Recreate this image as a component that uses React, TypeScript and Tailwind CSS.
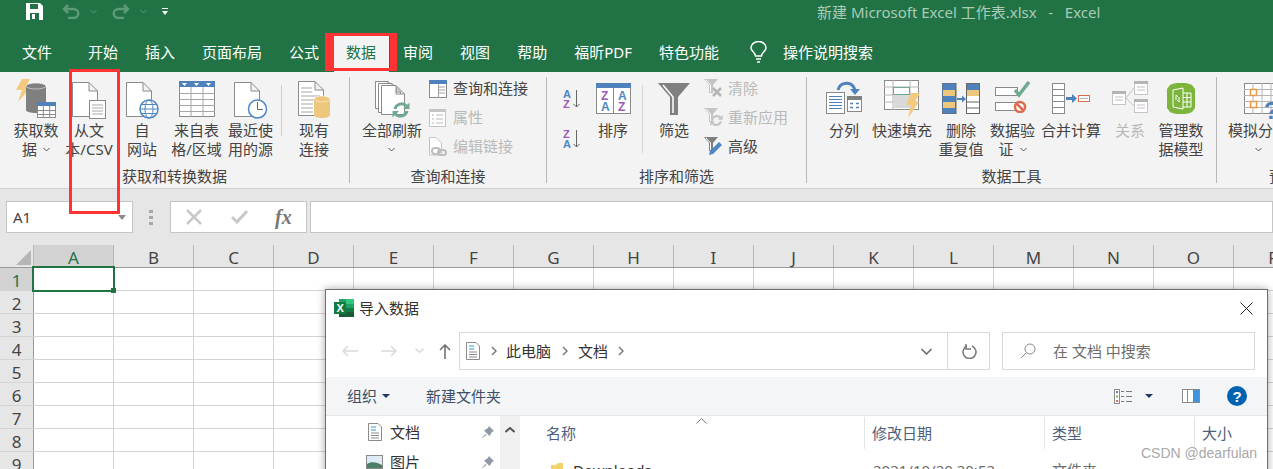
import React from 'react';

const blue = '#4f81bd';
const line = '#8a8a8a';
const orange = '#f2c97d';
const dis = '#c4c4c4';

const Chev = ({ className = '' }: { className?: string }) => (
  <svg width="7" height="5" viewBox="0 0 7 5" className={className}>
    <path d="M.5 1 3.5 4 6.5 1" fill="none" stroke="#555" />
  </svg>
);

const Doc = ({ x = 0, y = 0, w = 26, h = 35, c = line }: { x?: number; y?: number; w?: number; h?: number; c?: string }) => (
  <path d={`M${x + .5} ${y + .5}H${x + w - 9}L${x + w - .5} ${y + 9}V${y + h - .5}H${x + .5}ZM${x + w - 9} ${y + .5}V${y + 9}H${x + w - .5}`} fill="#fff" stroke={c} />
);

const Cyl = ({ x, y, w, h, c }: { x: number; y: number; w: number; h: number; c: string }) => (
  <g>
    <path d={`M${x} ${y + 3}V${y + h - 3}C${x} ${y + h + 1} ${x + w} ${y + h + 1} ${x + w} ${y + h - 3}V${y + 3}Z`} fill={c} />
    <ellipse cx={x + w / 2} cy={y + 3} rx={w / 2} ry="3" fill={c} stroke="#fff" strokeOpacity=".5" />
  </g>
);

const MiniTable = ({ x, y, w, h }: { x: number; y: number; w: number; h: number }) => (
  <g>
    <rect x={x + .5} y={y + .5} width={w - 1} height={h - 1} fill="#fff" stroke={line} />
    <rect x={x} y={y} width={w} height="4" fill={blue} />
    <path d={`M${x + w / 3} ${y + 4}V${y + h}M${x + (2 * w) / 3} ${y + 4}V${y + h}M${x} ${y + 8.5}H${x + w}M${x} ${y + 12.5}H${x + w}`} stroke={line} />
  </g>
);

const IconGet = () => (
  <svg width="41" height="42" viewBox="0 0 41 42">
    <path d="M6 1H14L10 9H15L2 24 6 12H0Z" fill={orange} />
    <Cyl x={10} y={5} w={20} h={30} c="#808080" />
    <MiniTable x={21} y={24} w={19} h={16} />
  </svg>
);
const IconText = () => (
  <svg width="34" height="37" viewBox="0 0 34 37">
    <Doc />
    <rect x="17.5" y="18.5" width="16" height="18" fill="#fff" stroke={line} />
    <path d="M20 23H31M20 26H31M20 29H31M20 32H31" stroke="#a8a8a8" />
  </svg>
);
const IconWeb = () => (
  <svg width="33" height="37" viewBox="0 0 33 37">
    <Doc />
    <circle cx="23" cy="27" r="9" fill="#fff" stroke="#4f86c6" strokeWidth="1.5" />
    <ellipse cx="23" cy="27" rx="4" ry="9" fill="none" stroke="#4f86c6" />
    <path d="M14 27H32M15.5 22.5H30.5M15.5 31.5H30.5" stroke="#4f86c6" />
  </svg>
);
const IconSheet = () => (
  <svg width="36" height="36" viewBox="0 0 36 36">
    <rect x=".5" y=".5" width="35" height="35" fill="#fff" stroke={line} />
    <rect width="36" height="6" fill={blue} />
    <path d="M3 2H8L5.5 5ZM15 2H20L17.5 5ZM27 2H32L29.5 5Z" fill="#fff" />
    <path d="M12 6V36M24 6V36M0 12.5H36M0 18.5H36M0 24.5H36M0 30.5H36" stroke="#a6a6a6" />
  </svg>
);
const IconRecent = () => (
  <svg width="34" height="37" viewBox="0 0 34 37">
    <Doc />
    <circle cx="23.5" cy="27" r="9" fill="#fff" stroke="#4f86c6" strokeWidth="1.5" />
    <path d="M23.5 20V27.5H29" fill="none" stroke="#666" />
  </svg>
);
const IconExisting = () => (
  <svg width="33" height="38" viewBox="0 0 33 38">
    <Doc />
    <path d="M3 7H14M3 11H14M3 15H22M3 19H22M3 23H15M3 27H15M3 31H15" stroke="#a6a6a6" />
    <Cyl x={16} y={15} w={16} h={22} c="#edc77c" />
  </svg>
);
const Refresh = ({ c, size = 18 }: { c: string; size?: number }) => (
  <svg width={size} height={size} viewBox="0 0 18 18" fill="none" stroke={c} strokeWidth="3">
    <path d="M3 8C4 3 11 1 14.500 5" />
    <path d="M15 10C14 15 7 17 3.500 13" />
    <path d="M17.500 1.500V8H11ZM.5 16.500V10H7Z" fill={c} stroke="none" />
  </svg>
);
const IconRefreshAll = () => (
  <svg width="37" height="40" viewBox="0 0 37 40">
    <Doc x={1} y={1} w={22} h={28} />
    <Doc x={4} y={3} w={23} h={30} />
    <Doc x={7} y={5} w={24} h={30} />
    <g transform="translate(18,21)">
      <Refresh c="#6fa98f" size={18} />
    </g>
  </svg>
);
const IconQuery = () => (
  <svg width="18" height="18" viewBox="0 0 18 18">
    <rect x=".5" y=".5" width="17" height="17" fill="#fff" stroke={line} />
    <rect width="18" height="4" fill={blue} />
    <path d="M10 7H16M10 10H16M10 13H16M9.500 4V18" stroke="#a0a0a0" />
  </svg>
);
const IconProps = () => (
  <svg width="18" height="18" viewBox="0 0 18 18">
    <rect x=".5" y=".5" width="16" height="17" fill="#fff" stroke={dis} />
    <rect width="17" height="3" fill={dis} />
    <path d="M3 6H5M3 10H5M3 14H5M7 6H14M7 10H14M7 14H14" stroke="#b5b5b5" />
  </svg>
);
const IconEditLink = () => (
  <svg width="18" height="19" viewBox="0 0 18 19">
    <path d="M.5.5H7L12.500 6V18H.5Z" fill="#fff" stroke={dis} />
    <g fill="none" stroke="#bdbdbd" strokeWidth="2">
      <rect x="3" y="11" width="8" height="6" rx="3" />
      <rect x="9" y="13" width="8" height="5" rx="2.500" />
    </g>
  </svg>
);
const Sort = ({ a, b, ca, cb }: { a: string; b: string; ca: string; cb: string }) => (
  <svg width="18" height="20" viewBox="0 0 18 20" fontFamily="Liberation Sans" fontSize="11" fontWeight="700">
    <text x="0" y="9" fill={ca}>{a}</text>
    <text x="0" y="19" fill={cb}>{b}</text>
    <path d="M13.500 1V18M10.500 15 13.500 18 16.500 15" fill="none" stroke="#666" />
  </svg>
);
const IconSort = () => (
  <svg width="35" height="31" viewBox="0 0 35 31" fontFamily="Liberation Sans" fontSize="12" fontWeight="700">
    <rect x=".5" y=".5" width="34" height="30" fill="#fff" stroke={line} />
    <rect width="35" height="5" fill={blue} />
    <path d="M17.500 5V31" stroke={line} />
    <text x="5" y="17" fill="#9a5cb4">Z</text>
    <text x="5" y="28" fill="#4f86c6">A</text>
    <text x="22" y="17" fill="#4f86c6">A</text>
    <text x="22" y="28" fill="#9a5cb4">Z</text>
  </svg>
);
const IconFilter = () => (
  <svg width="32" height="32" viewBox="0 0 32 32">
    <path d="M0 0H32L20 14V32H12V14Z" fill="#808080" />
    <path d="M5 2 15 14V30" fill="none" stroke="#fff" strokeWidth="1.500" />
  </svg>
);
const Funnel = ({ c }: { c: string }) => (
  <g>
    <path d="M0 0H14L9 6V14H5V6Z" fill={c} />
    <path d="M2 1 6.500 6V13" fill="none" stroke="#fff" />
  </g>
);
const IconClear = () => (
  <svg width="19" height="19" viewBox="0 0 19 19">
    <Funnel c={dis} />
    <path d="M9 9 17 17M17 9 9 17" stroke="#b5b5b5" strokeWidth="2.500" />
  </svg>
);
const IconReapply = () => (
  <svg width="19" height="19" viewBox="0 0 19 19">
    <Funnel c={dis} />
    <g transform="translate(6,6)">
      <Refresh c="#c4c4c4" size={13} />
    </g>
  </svg>
);
const IconAdvanced = () => (
  <svg width="19" height="19" viewBox="0 0 19 19">
    <Funnel c="#808080" />
    <path d="M5 18 6 14 15 5 18 8 9 17Z" fill="#4f86c6" />
  </svg>
);
const IconSplit = () => (
  <svg width="36" height="33" viewBox="0 0 36 33">
    <path d="M12 9C14 1 26-1 29 9" fill="none" stroke={blue} strokeWidth="3" />
    <path d="M24 8H34L29 14Z" fill={blue} />
    <rect x=".5" y="11.500" width="18" height="21" fill="#fff" stroke={line} />
    <path d="M3 15.500H16M3 18.500H16M3 21.500H16M3 24.500H16M3 27.500H16" stroke={blue} />
    <rect x="21.500" y="15.500" width="14" height="15" fill="#fff" stroke={line} />
    <rect x="21" y="15" width="15" height="4" fill="#808080" />
    <path d="M24 22.500H27M30 22.500H33M24 26.500H27M30 26.500H33" stroke={blue} strokeWidth="1.500" />
  </svg>
);
const IconFlash = () => (
  <svg width="37" height="38" viewBox="0 0 37 38">
    <rect x=".5" y=".5" width="34" height="29" fill="#fff" stroke={line} />
    <path d="M9 0V30M26 0V30M0 7H35M0 15H35M0 22H35" stroke="#b5b5b5" />
    <rect x="9" y="15" width="17" height="13" fill="#d9d9d9" />
    <rect x="9.500" y="7.500" width="16" height="7" fill="#fff" stroke="#6fa98f" />
    <path d="M27 13H36L31 22H35L24 38 27 25H22Z" fill={orange} />
  </svg>
);
const IconDedup = () => (
  <svg width="38" height="31" viewBox="0 0 38 31">
    <rect x="0" y="0" width="14" height="31" fill={blue} stroke="#666" />
    <rect x="1" y="7" width="12" height="6" fill="#edc77c" />
    <rect x="1" y="19" width="12" height="6" fill="#edc77c" />
    <path d="M15 16H20" stroke={blue} strokeWidth="2" />
    <path d="M20 12.500 24 16 20 19.500Z" fill={blue} />
    <rect x="24.500" y=".5" width="13" height="30" fill="#fff" stroke="#666" />
    <rect x="25" y="1" width="12" height="6" fill={blue} />
    <rect x="25" y="7" width="12" height="6" fill="#edc77c" />
    <path d="M25 19H37M25 25H37" stroke="#666" />
  </svg>
);
const IconValidate = () => (
  <svg width="36" height="32" viewBox="0 0 36 32">
    <rect x=".5" y="6.500" width="22" height="8" fill="#fff" stroke={line} />
    <rect x=".5" y="21.500" width="22" height="8" fill="#fff" stroke={line} />
    <path d="M20 9 24 14 34 1" fill="none" stroke="#6fa98f" strokeWidth="3.500" />
    <circle cx="25" cy="26" r="5" fill="#fff" stroke="#dd6b4d" strokeWidth="2.500" />
    <path d="M22 23 28 29" stroke="#dd6b4d" strokeWidth="2.500" />
  </svg>
);
const IconMerge = () => (
  <svg width="38" height="31" viewBox="0 0 38 31">
    <rect x=".5" y=".5" width="12" height="30" fill="#fff" stroke={line} />
    <path d="M0 6.500H12M0 12.500H12M0 18.500H12M0 24.500H12" stroke={line} />
    <path d="M14 15.500H21" stroke={blue} strokeWidth="3" />
    <path d="M20 11 25 15.500 20 20Z" fill={blue} />
    <rect x="26.500" y="12.500" width="11" height="6" fill="#fff" stroke="#dd6b4d" />
    <path d="M28 15.500H36" stroke="#b5b5b5" />
  </svg>
);
const RelBox = ({ x, y }: { x: number; y: number }) => (
  <g>
    <rect x={x + .5} y={y + .5} width="13" height="13" fill="#fff" stroke={dis} />
    <rect x={x} y={y} width="14" height="3" fill="#b5b5b5" />
    <path d={`M${x + 3} ${y + 6}H${x + 11}M${x + 3} ${y + 9}H${x + 11}`} stroke="#cdb9cd" />
  </g>
);
const IconRelations = () => (
  <svg width="36" height="32" viewBox="0 0 36 32">
    <path d="M14 17 22 7M14 17 22 25" stroke={dis} fill="none" />
    <RelBox x={22} y={0} />
    <RelBox x={0} y={10} />
    <RelBox x={22} y={18} />
  </svg>
);
const IconModel = () => (
  <svg width="28" height="31" viewBox="0 0 28 31">
    <path d="M3 2C9-1 19-1 25 2L28 6V25L25 29C19 32 9 32 3 29L0 25V6Z" fill="#7db53c" />
    <path d="M6 7 16 5V26L6 24Z" fill="none" stroke="#fff" />
    <path d="M16 10H24V24H16M16 14.500H24M16 19H24M20 10V24" fill="none" stroke="#fff" />
    <path d="M9 17V12L11 14M12 14V19L10 17" fill="none" stroke="#fff" />
  </svg>
);
const IconWhatIf = () => (
  <svg width="36" height="37" viewBox="0 0 36 37" fontFamily="Liberation Sans" fontWeight="700">
    <rect x=".5" y=".5" width="42" height="30" fill="#fff" stroke={line} />
    <path d="M9 0V31M18 0V31M27 0V31M0 6.500H36M0 12.500H36M0 18.500H36M0 24.500H36" stroke="#b5b5b5" />
    <rect x="6.500" y="6.500" width="6" height="6" fill="#fff" stroke="#ea9a4a" strokeWidth="1.500" />
    <rect x="6.500" y="18.500" width="6" height="6" fill="#fff" stroke="#ea9a4a" strokeWidth="1.500" />
    <text x="20" y="36" fontSize="24" fill={blue}>?</text>
  </svg>
);

// 大按钮:图标 + 最多两行文字,pb 用来抬高较矮的图标
const Big = ({ w, icon, lines, off, pb = 'pb-[2px]' }: { w: string; icon: React.ReactNode; lines: React.ReactNode[]; off?: boolean; pb?: string }) => (
  <div className={`${w} flex shrink-0 flex-col items-center`}>
    <div className={`flex h-[43px] items-end justify-center ${pb}`}>{icon}</div>
    <div className={`text-center text-[15px] leading-[19px] whitespace-nowrap ${off ? 'text-[#b9b9b9]' : 'text-[#444]'}`}>
      {lines.map((l, i) => (
        <div key={i} className="flex h-[19px] items-center justify-center">{l}</div>
      ))}
    </div>
  </div>
);

const Small = ({ icon, text, off }: { icon: React.ReactNode; text: string; off?: boolean }) => (
  <div className="flex h-[29px] items-center">
    <div className="flex w-[24px] shrink-0 items-center justify-start">{icon}</div>
    <span className={`text-[15px] leading-[19px] whitespace-nowrap ${off ? 'text-[#b9b9b9]' : 'text-[#444]'}`}>{text}</span>
  </div>
);

const Group = ({ w, label, children, className = '' }: { w: string; label: string; children: React.ReactNode; className?: string }) => (
  <div className={`${w} my-[5px] flex h-[106px] shrink-0 flex-col border-r border-[#b9b9b9]`}>
    <div className={`flex h-[91px] shrink-0 pt-[1px] ${className}`}>{children}</div>
    <div className="h-[15px] text-center text-[15px] leading-[16px] whitespace-nowrap text-[#444]">{label}</div>
  </div>
);

const Ribbon = () => (
  <div className="flex h-[117px] overflow-hidden border-b border-[#d2d2d2] bg-[#f3f3f3] text-[#444]">
    <Group w="w-[350px]" label="获取和转换数据" className="pl-[10px]">
      <Big w="w-[52px]" pb="pb-[1px]" icon={<IconGet />} lines={['获取数', <>据<Chev className="ml-[6px]" /></>]} />
      <Big w="w-[54px]" icon={<IconText />} lines={['从文', '本/CSV']} />
      <Big w="w-[52px]" icon={<IconWeb />} lines={['自', '网站']} />
      <Big w="w-[57px]" pb="pb-[4px]" icon={<IconSheet />} lines={['来自表', '格/区域']} />
      <Big w="w-[51px]" icon={<IconRecent />} lines={['最近使', '用的源']} />
      <div className="mx-[5px] mt-[7px] h-[51px] w-px bg-[#cfcfcf]" />
      <div className="w-[1px]" />
      <Big w="w-[52px]" icon={<IconExisting />} lines={['现有', '连接']} />
    </Group>
    <Group w="w-[197px]" label="查询和连接" className="pl-[11px]">
      <Big w="w-[62px]" pb="pb-[1px]" icon={<IconRefreshAll />} lines={['全部刷新', <Chev />]} />
      <div className="-mt-[4px] ml-[6px] flex flex-col">
        <Small icon={<IconQuery />} text="查询和连接" />
        <Small icon={<IconProps />} text="属性" off />
        <Small icon={<IconEditLink />} text="编辑链接" off />
      </div>
    </Group>
    <Group w="w-[260px]" label="排序和筛选" className="pl-[16px]">
      <div className="flex w-[26px] flex-col gap-[20px] pt-[11px]">
        <Sort a="A" b="Z" ca="#4f86c6" cb="#9a5cb4" />
        <Sort a="Z" b="A" ca="#9a5cb4" cb="#4f86c6" />
      </div>
      <Big w="w-[48px]" pb="pb-[7px]" icon={<IconSort />} lines={['排序']} />
      <div className="mx-[5px] mt-[7px] h-[68px] w-px bg-[#d5d5d5]" />
      <Big w="w-[52px]" pb="pb-[6px]" icon={<IconFilter />} lines={['筛选']} />
      <div className="-mt-[4px] ml-[4px] flex flex-col">
        <Small icon={<IconClear />} text="清除" off />
        <Small icon={<IconReapply />} text="重新应用" off />
        <Small icon={<IconAdvanced />} text="高级" />
      </div>
    </Group>
    <Group w="w-[410px]" label="数据工具" className="pl-[9px]">
      <Big w="w-[56px]" pb="pb-[7px]" icon={<IconSplit />} lines={['分列']} />
      <Big w="w-[60px]" pb="pb-[3px]" icon={<IconFlash />} lines={['快速填充']} />
      <Big w="w-[58px]" pb="pb-[7px]" icon={<IconDedup />} lines={['删除', '重复值']} />
      <Big w="w-[45px]" pb="pb-[8px]" icon={<IconValidate />} lines={['数据验', <>证<Chev className="ml-[6px]" /></>]} />
      <Big w="w-[72px]" pb="pb-[7px]" icon={<IconMerge />} lines={['合并计算']} />
      <Big w="w-[46px]" pb="pb-[8px]" icon={<IconRelations />} lines={['关系']} off />
      <Big w="w-[56px]" pb="pb-[7px]" icon={<IconModel />} lines={['管理数', '据模型']} />
    </Group>
    <div className="my-[5px] flex h-[106px] w-[180px] shrink-0 flex-col pl-[11px]">
      <div className="flex h-[91px] shrink-0 pt-[1px]">
        <div className="flex w-[60px] flex-col items-center">
          <div className="flex h-[43px] items-end justify-start self-start pb-[1px] pl-[16px]"><IconWhatIf /></div>
          <div className="text-[15px] leading-[19px] whitespace-nowrap">模拟分析</div>
          <div className="flex h-[19px] items-center"><Chev /></div>
        </div>
      </div>
      <div className="h-[15px] pl-[41px] text-[15px] leading-[16px] whitespace-nowrap text-[#444]">预测</div>
    </div>
  </div>
);

const tabs = ['开始', '插入', '页面布局', '公式', '数据', '审阅', '视图', '帮助', '福昕PDF', '特色功能'];

const TitleArea = () => (
  <div className="h-[72px] bg-[#217346] text-white">
    <div className="flex h-[34px] items-start">
      <div className="flex items-center pl-[26px] pt-[3px]">
        <svg width="17" height="17" viewBox="0 0 17 17">
          <path d="M0 0H14L17 3V17H0Z" fill="#fff" />
          <rect x="4" y="1" width="8" height="5" fill="#217346" />
          <rect x="4" y="10" width="9" height="7" fill="#217346" />
          <rect x="6" y="11" width="3" height="5" fill="#fff" />
        </svg>
        <svg width="18" height="15" viewBox="0 0 18 15" className="ml-[19px]" fill="none" stroke="#5d9a78" strokeWidth="2.500">
          <path d="M2 5H11C18 5 18 14 11 14H6" />
          <path d="M6 1 2 5 6 9" />
        </svg>
        <svg width="7" height="5" viewBox="0 0 7 5" className="ml-[10px]"><path d="M.5 1 3.500 4 6.500 1" fill="none" stroke="#5d9a78" /></svg>
        <svg width="18" height="15" viewBox="0 0 18 15" className="ml-[15px]" fill="none" stroke="#5d9a78" strokeWidth="2.500">
          <path d="M16 5H7C0 5 0 14 7 14H12" />
          <path d="M12 1 16 5 12 9" />
        </svg>
        <svg width="7" height="5" viewBox="0 0 7 5" className="ml-[10px]"><path d="M.5 1 3.500 4 6.500 1" fill="none" stroke="#5d9a78" /></svg>
        <svg width="6" height="7" viewBox="0 0 6 7" className="ml-[15px]">
          <path d="M0 0H6V1H0ZM0 3H6L3 7Z" fill="#fff" />
        </svg>
      </div>
      <div className="absolute top-[2px] left-[817px] text-[15px] leading-[20px] whitespace-pre text-[#a9cbb7]">新建 Microsoft Excel 工作表.xlsx   -   Excel</div>
    </div>
    <div className="flex h-[38px] items-center pb-[2px] pl-[22px] text-[15px]">
      <span className="mr-[36px]">文件</span>
      <div className="flex gap-[27px]">
        {tabs.map((t) =>
          t === '数据' ? (
            <span key={t} className="relative isolate text-[#217346]">
              <span className="absolute -top-[5px] -left-[12px] -z-10 h-[36px] w-[55px] bg-[#f3f3f3]" />
              {t}
            </span>
          ) : (
            <span key={t}>{t}</span>
          ),
        )}
      </div>
      <svg width="17" height="22" viewBox="0 0 17 22" className="ml-[31px]" fill="none" stroke="#fff" strokeWidth="1.500">
        <path d="M5.500 15C5 11 1 10 1 7A7.500 6.500 0 0 1 16 7C16 10 12 11 11.500 15Z" />
        <path d="M6 18H11M7 21H10" />
      </svg>
      <span className="ml-[16px]">操作说明搜索</span>
    </div>
  </div>
);

const FormulaBar = () => (
  <div className="flex h-[56px] items-start bg-[#e6e6e6] pt-[12px]">
    <div className="ml-[6px] flex h-[32px] w-[127px] items-center justify-between border border-[#c6c6c6] bg-white pr-[6px] pl-[6px] text-[15px] text-[#444]">
      A1
      <svg width="8" height="5" viewBox="0 0 8 5"><path d="M0 0H8L4 5Z" fill="#8c8c8c" /></svg>
    </div>
    <div className="mt-[9px] ml-[16px] flex w-[4px] flex-col gap-[3px]">
      <div className="h-[3px] bg-[#a6a6a6]" />
      <div className="h-[3px] bg-[#a6a6a6]" />
      <div className="h-[3px] bg-[#a6a6a6]" />
    </div>
    <div className="ml-[17px] flex h-[32px] w-[137px] items-center border border-[#c6c6c6] bg-white pl-[15px]">
      <svg width="16" height="16" viewBox="0 0 16 16"><path d="M1 1 15 15M15 1 1 15" stroke="#c8c8c8" strokeWidth="2.500" /></svg>
      <svg width="17" height="14" viewBox="0 0 17 14" className="ml-[29px]"><path d="M1 7 6 12 16 1" fill="none" stroke="#c8c8c8" strokeWidth="3" /></svg>
      <span className="ml-[27px] font-['Liberation_Serif'] text-[20px] leading-none font-bold text-[#777] italic">fx</span>
    </div>
    <div className="ml-[3px] h-[32px] flex-1 border border-[#c6c6c6] bg-white" />
  </div>
);

const cols = 'ABCDEFGHIJKLMNOP'.split('');
const rows = [1, 2, 3, 4, 5, 6, 7, 8, 9];

const Sheet = () => (
  <div className="relative">
    <div className="flex h-[23px] border-b border-[#9b9b9b] bg-[#e6e6e6]">
      <div className="relative h-full w-[34px] shrink-0 border-r border-[#b9b9b9]">
        <div className="absolute right-[2px] bottom-[2px] h-0 w-0 border-b-[15px] border-l-[15px] border-b-[#b5b5b5] border-l-transparent" />
      </div>
      {cols.map((c, i) => (
        <div key={c} className={`flex h-full w-[80px] shrink-0 items-center justify-center border-r border-[#b9b9b9] pt-[2px] text-[17px] leading-none ${i === 0 ? 'bg-[#d2d2d2] text-[#217346]' : 'text-[#444]'}`}>{c}</div>
      ))}
    </div>
    {rows.map((r) => (
      <div key={r} className="flex h-[23px] border-b border-[#d4d4d4] bg-white">
        <div className={`flex h-full w-[34px] shrink-0 items-center justify-center border-r border-[#9b9b9b] pt-[2px] text-[17px] leading-none ${r === 1 ? 'bg-[#d2d2d2] text-[#217346]' : 'bg-[#e6e6e6] text-[#444]'}`}>{r}</div>
        {cols.map((c) => (
          <div key={c} className="h-full w-[80px] shrink-0 border-r border-[#d4d4d4]" />
        ))}
      </div>
    ))}
    <div className="absolute top-[21px] left-[32px] h-[26px] w-[83px] border-2 border-[#217346]" />
    <div className="absolute top-[43px] left-[111px] h-[5px] w-[5px] bg-[#217346]" />
  </div>
);

const ExcelMark = () => (
  <svg width="20" height="18" viewBox="0 0 20 18" fontFamily="Liberation Sans">
    <rect x="5" y="0" width="15" height="18" fill="#21a366" />
    <rect x="12" y="0" width="8" height="5" fill="#33c481" />
    <rect x="12" y="9" width="8" height="5" fill="#107c41" />
    <rect x="5" y="13" width="15" height="5" fill="#185c37" />
    <rect x="0" y="3" width="12" height="12" fill="#107c41" />
    <text x="2.500" y="13" fontSize="11" fontWeight="700" fill="#fff">X</text>
  </svg>
);

const DocsIcon = ({ size = 14 }: { size?: number }) => (
  <svg width={size} height={size + 4} viewBox="0 0 14 18" className="shrink-0">
    <path d="M.5.5H10L13.500 4V17.500H.5Z" fill="#fff" stroke="#8a8a8a" />
    <path d="M3 4H8M3 7H8" stroke="#2f9be0" />
    <path d="M3 10H11M3 12.500H11M3 15H11" stroke="#8a8a8a" />
  </svg>
);

const Pin = () => (
  <svg width="13" height="13" viewBox="0 0 13 13">
    <path d="M8 0 13 5 11 6 8.500 10 3 4.500 7 2ZM4.500 8 0 13 5.500 9Z" fill="#8f9aa6" />
  </svg>
);

const Crumb = () => (
  <svg width="6" height="10" viewBox="0 0 6 10"><path d="M1 1 5 5 1 9" fill="none" stroke="#7a7a7a" strokeWidth="1.500" /></svg>
);

const Dialog = () => (
  <div className="absolute top-[289px] left-[325px] h-[190px] w-[943px] overflow-hidden border border-[#6e6e6e] bg-white shadow-[0_0_8px_rgba(0,0,0,.35)]">
    <div className="flex h-[34px] items-center pt-[2px] pr-[14px] pl-[8px]">
      <ExcelMark />
      <span className="ml-[5px] text-[15px] text-[#333]">导入数据</span>
      <svg width="13" height="13" viewBox="0 0 13 13" className="ml-auto"><path d="M.5.5 12.500 12.500M12.500.5.5 12.500" stroke="#222" /></svg>
    </div>
    <div className="mt-[8px] flex h-[38px] items-center">
      <div className="flex w-[133px] shrink-0 items-center pl-[16px]">
        <svg width="16" height="12" viewBox="0 0 16 12"><path d="M16 6H1M6 1 1 6 6 11" fill="none" stroke="#d9d9d9" strokeWidth="1.500" /></svg>
        <svg width="16" height="12" viewBox="0 0 16 12" className="ml-[23px]"><path d="M0 6H15M10 1 15 6 10 11" fill="none" stroke="#d9d9d9" strokeWidth="1.500" /></svg>
        <svg width="9" height="6" viewBox="0 0 9 6" className="ml-[18px]"><path d="M.5.5 4.500 4.500 8.500.5" fill="none" stroke="#d9d9d9" strokeWidth="1.500" /></svg>
        <svg width="12" height="15" viewBox="0 0 12 15" className="ml-[15px]"><path d="M6 15V1M1 6 6 1 11 6" fill="none" stroke="#6e6e6e" strokeWidth="1.500" /></svg>
      </div>
      <div className="flex h-[38px] w-[531px] shrink-0 items-center border border-[#d9d9d9] pl-[6px] text-[15px] text-[#333]">
        <DocsIcon />
        <span className="ml-[11px]"><Crumb /></span>
        <span className="ml-[9px]">此电脑</span>
        <span className="ml-[11px]"><Crumb /></span>
        <span className="ml-[10px]">文档</span>
        <span className="ml-[10px]"><Crumb /></span>
        <svg width="11" height="7" viewBox="0 0 11 7" className="ml-[297px]"><path d="M.5 1 5.500 6 10.500 1" fill="none" stroke="#666" strokeWidth="1.500" /></svg>
        <div className="ml-[15px] h-full w-px bg-[#d9d9d9]" />
        <svg width="15" height="15" viewBox="0 0 15 15" className="ml-[14px]" fill="none" stroke="#777" strokeWidth="1.500">
          <path d="M5 2A6.500 6.500 0 1 0 10 2" />
          <path d="M9 0V5H14" transform="translate(-5 0)" />
        </svg>
      </div>
      <div className="ml-[12px] flex h-[38px] w-[253px] shrink-0 items-center border border-[#d9d9d9] pl-[17px] text-[15px] text-[#6d6d6d]">
        <svg width="16" height="16" viewBox="0 0 16 16" fill="none" stroke="#8a8a8a">
          <circle cx="10" cy="6" r="5" />
          <path d="M6.500 9.500 1 15" />
        </svg>
        <span className="ml-[17px] whitespace-pre">在 文档 中搜索</span>
      </div>
    </div>
    <div className="mt-[7px] flex h-[39px] items-center border-b border-[#e5e5e5] bg-[#f4f5f7] pl-[21px] text-[15px] text-[#3d4f66]">
      <span>组织</span>
      <svg width="8" height="4" viewBox="0 0 8 4" className="ml-[5px]"><path d="M0 0H8L4 4Z" fill="#1f3864" /></svg>
      <span className="ml-[36px]">新建文件夹</span>
      <svg width="18" height="15" viewBox="0 0 18 15" className="ml-[613px]">
        <rect x=".5" y=".5" width="5" height="14" fill="#fff" stroke="#8a8a8a" />
        <rect x="2" y="2" width="2" height="2" fill="#4f81bd" />
        <rect x="2" y="6.500" width="2" height="2" fill="#7db53c" />
        <rect x="2" y="11" width="2" height="2" fill="#dd6b4d" />
        <path d="M7 2.500H10M12 2.500H18M7 7.500H10M12 7.500H18M7 12.500H10M12 12.500H18" stroke="#777" />
      </svg>
      <svg width="8" height="4" viewBox="0 0 8 4" className="ml-[13px]"><path d="M0 0H8L4 4Z" fill="#1f3864" /></svg>
      <svg width="18" height="14" viewBox="0 0 18 14" className="ml-[29px]">
        <rect x=".5" y=".5" width="17" height="13" fill="#fff" stroke="#8a8a8a" />
        <rect x="11" y="1" width="6" height="12" fill="#3f94e0" />
        <path d="M5.500 1V13" stroke="#8a8a8a" />
      </svg>
      <div className="ml-[27px] flex h-[20px] w-[20px] items-center justify-center rounded-full bg-[#0063b1] font-['Liberation_Sans'] text-[15px] leading-none font-bold text-white">?</div>
    </div>
    <div className="flex">
      <div className="h-[60px] w-[174px] shrink-0 pt-[1px] text-[15px] text-[#333]">
        <div className="flex h-[30px] items-center pl-[42px]">
          <DocsIcon />
          <span className="ml-[8px] whitespace-nowrap">文档</span>
          <span className="ml-[61px] shrink-0"><Pin /></span>
        </div>
        <div className="flex h-[30px] items-center pl-[40px]">
          <svg width="17" height="14" viewBox="0 0 17 14" className="shrink-0">
            <rect x=".5" y=".5" width="16" height="13" fill="#dcebf5" stroke="#8a8a8a" />
            <path d="M1 9C5 6 11 7 16 10V13H1Z" fill="#4d7f6a" />
          </svg>
          <span className="ml-[7px] whitespace-nowrap">图片</span>
          <span className="ml-[61px] shrink-0"><Pin /></span>
        </div>
      </div>
      <div className="flex h-[60px] w-[20px] shrink-0 justify-center bg-[#f0f0f0] pt-[11px]">
        <svg width="10" height="6" viewBox="0 0 10 6"><path d="M.5 5 5 1 9.500 5" fill="none" stroke="#555" strokeWidth="2" /></svg>
      </div>
      <div className="min-w-0 flex-1">
        <div className="relative flex h-[33px] pt-[1px] text-[15px] text-[#4c607a]">
          <svg width="11" height="6" viewBox="0 0 11 6" className="absolute top-[2px] left-[176px]"><path d="M.5 5.500 5.500.5 10.500 5.500" fill="none" stroke="#777" /></svg>
          <div className="flex w-[345px] items-center border-r border-[#e5e5e5] pl-[26px]">名称</div>
          <div className="flex w-[180px] items-center border-r border-[#e5e5e5] pl-[7px]">修改日期</div>
          <div className="flex w-[150px] items-center border-r border-[#e5e5e5] pl-[7px]">类型</div>
          <div className="flex items-center pl-[7px]">大小</div>
        </div>
        <div className="flex h-[40px] pt-[11px] text-[15px] leading-[20px] text-[#333]">
          <div className="flex w-[345px] items-start pl-[31px]">
            <svg width="12" height="16" viewBox="0 0 12 16" className="mt-[3px] shrink-0">
              <path d="M0 2H5L7 0H12V16H0Z" fill="#f4d36c" />
            </svg>
            <span className="ml-[10px]">Downloads</span>
          </div>
          <div className="w-[180px] pl-[8px] text-[#6d6d6d]">2021/10/20 20:52</div>
          <div className="w-[150px] pl-[7px] text-[#6d6d6d]">文件夹</div>
        </div>
      </div>
    </div>
  </div>
);

export default function App() {
  return (
    <div className="relative h-[469px] w-[1273px] overflow-hidden bg-white font-['Noto_Sans','Noto_Sans_CJK_SC',sans-serif]">
      <TitleArea />
      <Ribbon />
      <FormulaBar />
      <Sheet />
      <Dialog />
      {/* 截图上的红色标注框 */}
      <div className="absolute top-[33px] left-[325px] h-[38px] w-[72px] border-y-[3px] border-r-[7px] border-l-[9px] border-[#ff3333]" />
      <div className="absolute top-[69px] left-[69px] h-[145px] w-[51px] border-[3px] border-[#ff3333]" />
      <div className="absolute top-[444px] left-[1141px] font-['Liberation_Sans'] text-[14px] leading-[18px] whitespace-nowrap text-[#a8a8a8]">CSDN @dearfulan</div>
    </div>
  );
}
